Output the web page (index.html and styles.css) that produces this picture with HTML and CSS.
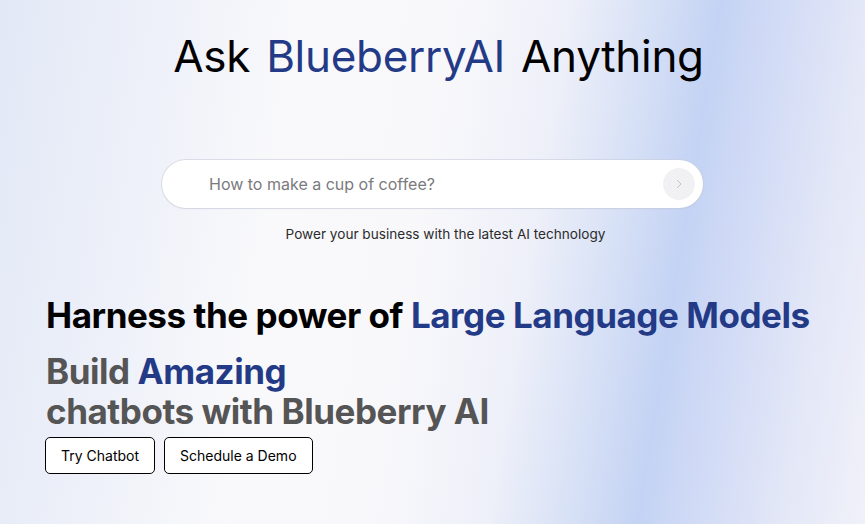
FILE: index.html
```html
<!DOCTYPE html>
<html lang="en">
<head>
<meta charset="utf-8">
<title>Ask BlueberryAI Anything</title>
<link rel="stylesheet" href="styles.css">
</head>
<body>
<main class="page">
  <section class="hero">
    <h1 class="title">Ask <span class="brand">BlueberryAI</span> Anything</h1>
    <form class="search" onsubmit="return false">
      <input class="search-input" type="text" placeholder="How to make a cup of coffee?">
      <button class="search-go" type="submit" aria-label="Ask">
        <svg width="12" height="12" viewBox="0 0 12 12"><path d="M4.5 2.5 L8 6 L4.5 9.5" fill="none" stroke="#c2c2c6" stroke-width="1" stroke-linecap="round" stroke-linejoin="round"/></svg>
      </button>
    </form>
    <p class="tagline">Power your business with the latest AI technology</p>
  </section>
  <section class="pitch">
    <h2 class="harness">Harness the power of <span class="blue">Large Language Models</span></h2>
    <h3 class="build">Build <span class="blue">Amazing</span><br>chatbots with Blueberry AI</h3>
    <div class="actions">
      <button class="btn">Try Chatbot</button>
      <button class="btn">Schedule a Demo</button>
    </div>
  </section>
</main>
</body>
</html>
```
FILE: styles.css
```css
html, body {
  margin: 0;
  padding: 0;
  height: 100%;
}
body {
  font-family: Inter, "Noto Sans", sans-serif;
  color: #000;
  overflow: hidden;
  background: linear-gradient(99deg,
    #e2e8f6 0%,
    #edf0f9 16%,
    #f9f9fb 32%,
    #f8f8fb 48%,
    #eef0f9 60%,
    #d9e2f6 68%,
    #c4d3f4 76%,
    #d3dcf6 83%,
    #e3e7f7 91%,
    #f0f1f9 100%);
}
.page {
  height: 524px;
  display: flex;
  flex-direction: column;
}
.hero {
  display: flex;
  flex-direction: column;
  align-items: center;
  padding-top: 26px;
}
.title {
  margin: 0;
  font-size: 44px;
  font-weight: 400;
  letter-spacing: -0.3px;
  word-spacing: 4px;
  line-height: 60px;
  padding-left: 12px;
}
.brand { color: #233a87; }
.search {
  margin-top: 74px;
  width: 541px;
  height: 48px;
  box-sizing: border-box;
  background: #fff;
  border-radius: 24px;
  box-shadow: 0 0 0 1px rgba(200, 205, 220, 0.6), 0 1px 2px rgba(0,0,0,0.06);
  display: flex;
  align-items: center;
  padding: 0 8px 0 47px;
}
.search-input {
  flex: 1;
  border: 0;
  outline: 0;
  background: transparent;
  font-family: inherit;
  font-size: 16px;
  color: #333;
  padding: 0;
}
.search-input::placeholder { color: #7a7a7e; }
.search-go {
  width: 32px;
  height: 32px;
  border-radius: 50%;
  border: 0;
  background: #f1f1f3;
  display: flex;
  align-items: center;
  justify-content: center;
  padding: 0;
}
.tagline {
  margin: 18px 0 0;
  font-size: 13.6px;
  color: #2b2b2b;
  padding-left: 26px;
}
.pitch {
  padding: 53px 0 0 45px;
}
.harness {
  margin: 0;
  font-size: 35px;
  font-weight: 700;
  line-height: 40px;
  letter-spacing: -0.45px;
  padding-left: 1px;
}
.blue { color: #233a87; }
.build {
  margin: 16px 0 0;
  font-size: 35px;
  font-weight: 700;
  line-height: 40px;
  color: #555;
  letter-spacing: -0.45px;
  padding-left: 1px;
}
.actions {
  display: flex;
  gap: 9px;
  margin-top: 6px;
}
.btn {
  height: 37px;
  padding: 0 15px;
  border: 1px solid #000;
  border-radius: 5px;
  background: #fff;
  font-family: inherit;
  font-size: 14px;
  color: #000;
}
```
